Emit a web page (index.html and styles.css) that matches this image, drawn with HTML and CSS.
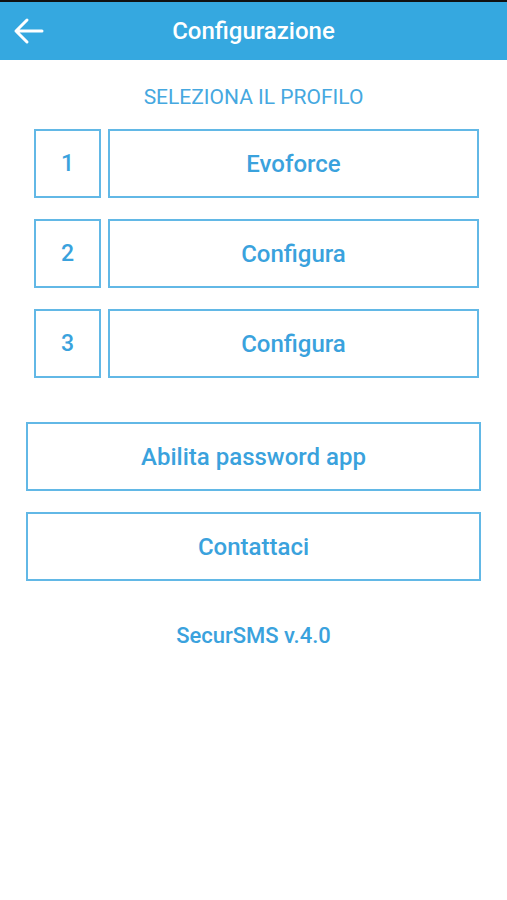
FILE: index.html
```html
<!DOCTYPE html>
<html>
<head>
<meta charset="utf-8">
<link rel="stylesheet" href="styles.css">
</head>
<body>
<div class="statusbar"></div>
<header class="navbar">
  <span class="back">
    <svg width="32" height="28" viewBox="0 0 32 28"><path d="M30 14H4M15 3L4 14l11 11" fill="none" stroke="#fff" stroke-width="3" stroke-linecap="round" stroke-linejoin="round"/></svg>
  </span>
  <h1 class="title">Configurazione</h1>
</header>
<main class="content">
  <p class="section">SELEZIONA IL PROFILO</p>
  <div class="profiles">
    <div class="row"><div class="box num">1</div><div class="box name">Evoforce</div></div>
    <div class="row"><div class="box num">2</div><div class="box name">Configura</div></div>
    <div class="row"><div class="box num">3</div><div class="box name">Configura</div></div>
  </div>
  <div class="actions">
    <div class="box btn">Abilita password app</div>
    <div class="box btn">Contattaci</div>
  </div>
  <p class="version">SecurSMS v.4.0</p>
</main>
</body>
</html>
```
FILE: styles.css
```css
* { box-sizing: border-box; }
html, body { margin: 0; padding: 0; background: #fff; }
body { font-family: Roboto, "Noto Sans", sans-serif; color: #3aa2dd; width: 507px; }
.statusbar { height: 2px; background: #111; }
.navbar { height: 58px; background: #35a8e0; position: relative; display: flex; align-items: center; justify-content: center; }
.back { position: absolute; left: 12px; top: 15px; display: flex; }
.title { margin: 0; color: #fff; font-size: 24px; font-weight: 500; }
.content { display: flex; flex-direction: column; }
.section { margin: 25px 0 0; text-align: center; font-size: 21px; line-height: 24px; color: #45a8e0; }
.profiles { margin: 20px 28px 0 34px; display: flex; flex-direction: column; gap: 21px; }
.row { display: flex; gap: 7px; height: 69px; }
.box { border: 2px solid #62b8e6; display: flex; align-items: center; justify-content: center; font-weight: 500; font-size: 24px; color: #3aa2dd; }
.num { width: 67px; font-size: 23px; }
.name { flex: 1; }
.actions { margin: 44px 26px 0 26px; display: flex; flex-direction: column; gap: 21px; }
.btn { height: 69px; }
.version { margin: 42px 0 0; text-align: center; font-size: 22px; font-weight: 500; line-height: 26px; color: #3aa2dd; }
```
